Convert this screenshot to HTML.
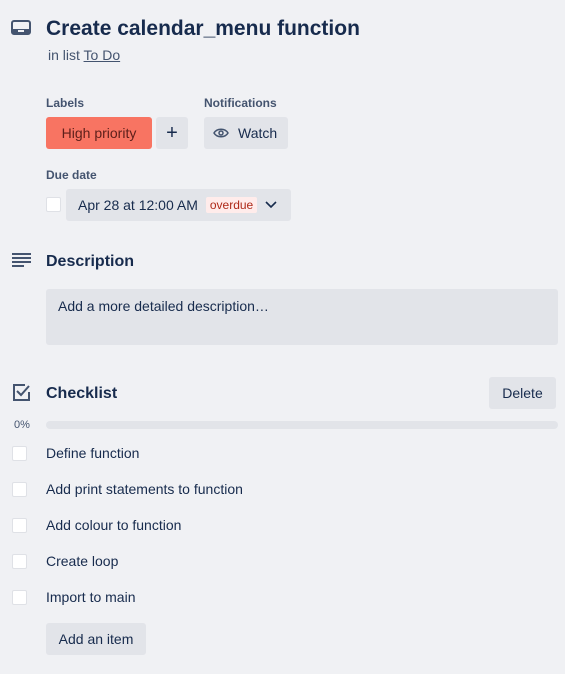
<!DOCTYPE html>
<html><head><style>
body{margin:0;width:565px;height:674px;background:#f0f1f4;font-family:"Liberation Sans",sans-serif;color:#172b4d;position:relative;overflow:hidden}
.a{position:absolute}
.btn{position:absolute;background:#e2e4e9;border-radius:3px;font-size:14px;color:#172b4d;display:flex;align-items:center}
.h{font-weight:bold;font-size:12px;color:#44546f}
.cb{position:absolute;width:13px;height:13px;background:#fff;border:1px solid #dfe1e6;border-radius:2px}
.item{position:absolute;left:46px;font-size:14px}
</style></head><body>
<svg class="a" style="left:11px;top:20px" width="20" height="16" viewBox="0 0 20 16"><rect x="1" y="1" width="18" height="13" rx="2" fill="none" stroke="#44546f" stroke-width="2"/><rect x="2" y="9" width="16" height="4" fill="#44546f"/><rect x="7" y="10" width="6" height="2" fill="#f0f1f4"/></svg>
<div class="a" style="left:46px;top:17px;font-size:21px;font-weight:bold">Create calendar_menu function</div>
<div class="a" style="left:48px;top:47px;font-size:14px;color:#44546f">in list <span style="text-decoration:underline">To Do</span></div>
<div class="a h" style="left:46px;top:96px">Labels</div>
<div class="a h" style="left:204px;top:96px">Notifications</div>
<div class="btn" style="left:46px;top:117px;width:106px;height:32px;background:#f87462;justify-content:center;color:#5d1f1a">High priority</div>
<div class="btn" style="left:156px;top:117px;width:32px;height:32px;justify-content:center;font-size:20px">+</div>
<div class="btn" style="left:204px;top:117px;width:84px;height:32px"><svg style="margin-left:9px" width="16" height="12" viewBox="0 0 16 12"><path d="M1 6C4 1 12 1 15 6C12 11 4 11 1 6Z" fill="none" stroke="#44546f" stroke-width="1.5"/><circle cx="8" cy="6" r="2" fill="none" stroke="#44546f" stroke-width="1.5"/></svg><span style="margin-left:9px">Watch</span></div>
<div class="a h" style="left:46px;top:168px">Due date</div>
<div class="cb" style="left:46px;top:197px"></div>
<div class="btn" style="left:66px;top:189px;width:225px;height:32px"><span style="margin-left:12px">Apr 28 at 12:00 AM</span><span style="margin-left:8px;background:#ffeceb;color:#ae2a19;font-size:12px;padding:1px 4px;border-radius:2px">overdue</span><svg style="margin-left:8px" width="12" height="8" viewBox="0 0 12 8"><path d="M1 1L6 6L11 1" fill="none" stroke="#172b4d" stroke-width="1.6"/></svg></div>
<svg class="a" style="left:12px;top:253px" width="20" height="14" viewBox="0 0 20 14"><g stroke="#44546f" stroke-width="2"><path d="M0 1H19M0 5H19M0 9H19M0 13H12"/></g></svg>
<div class="a" style="left:46px;top:253px;font-size:16px;font-weight:bold">Description</div>
<div class="btn" style="left:46px;top:289px;width:512px;height:56px;align-items:flex-start"><span style="margin:9px 0 0 12px">Add a more detailed description…</span></div>
<svg class="a" style="left:13px;top:384px" width="18" height="18" viewBox="0 0 18 18"><path d="M16 8V16H1V1H12" fill="none" stroke="#44546f" stroke-width="2"/><path d="M4 7L8 11L16 2" fill="none" stroke="#44546f" stroke-width="2"/></svg>
<div class="a" style="left:46px;top:385px;font-size:16px;font-weight:bold">Checklist</div>
<div class="btn" style="left:489px;top:377px;width:67px;height:32px;justify-content:center">Delete</div>
<div class="a" style="left:14px;top:419px;font-size:11px;color:#44546f">0%</div>
<div class="a" style="left:46px;top:421px;width:512px;height:8px;background:#e2e4e9;border-radius:4px"></div>
<div class="cb" style="left:12px;top:446px"></div><div class="item" style="top:445px">Define function</div>
<div class="cb" style="left:12px;top:482px"></div><div class="item" style="top:481px">Add print statements to function</div>
<div class="cb" style="left:12px;top:518px"></div><div class="item" style="top:517px">Add colour to function</div>
<div class="cb" style="left:12px;top:554px"></div><div class="item" style="top:553px">Create loop</div>
<div class="cb" style="left:12px;top:590px"></div><div class="item" style="top:589px">Import to main</div>
<div class="btn" style="left:46px;top:623px;width:100px;height:32px;justify-content:center">Add an item</div>
</body></html>
